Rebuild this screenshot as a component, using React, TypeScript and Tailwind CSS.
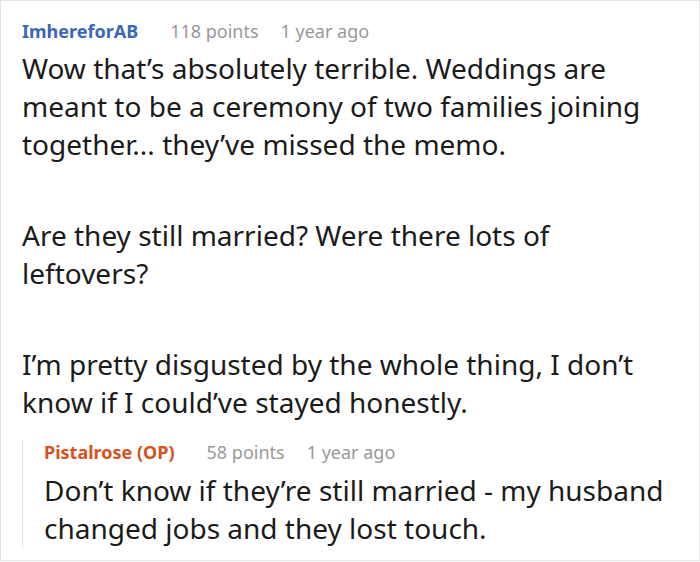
const font = { fontFamily: '"Noto Sans", "Open Sans", sans-serif' };

type MetaProps = { name: string; nameClass: string; points: string; age: string };

function Meta({ name, nameClass, points, age }: MetaProps) {
  return (
    <div className="flex items-baseline text-[18px] leading-[24px]">
      <span className={`font-bold ${nameClass}`}>{name}</span>
      <span className="ml-[32px] text-[#999999]">{points}</span>
      <span className="ml-[22px] text-[#999999]">{age}</span>
    </div>
  );
}

export default function App() {
  return (
    <div className="h-[562px] w-[700px] bg-white" style={font}>
      <div className="h-[561px] w-[700px] overflow-hidden border border-[#e3e3e3] pl-[21px] pr-[30px] pt-[18px]">
        <Meta name="ImhereforAB" nameClass="text-[#3a67b6]" points="118 points" age="1 year ago" />
        <div className="mt-[6px] text-[28px] leading-[38px] text-[#1b1b1b]">
          <p>
            Wow that’s absolutely terrible. Weddings are meant to be a ceremony of two families joining
            together... they’ve missed the memo.
          </p>
          <p className="mt-[53px]">Are they still married? Were there lots of leftovers?</p>
          <p className="mt-[53px]">
            I’m pretty disgusted by the whole thing, I don’t know if I could’ve stayed honestly.
          </p>
        </div>
        <div className="mt-[19px] border-l border-[#e3e3e3] pl-[21px]">
          <Meta name="Pistalrose (OP)" nameClass="text-[#d6531d]" points="58 points" age="1 year ago" />
          <p className="mt-[7px] text-[28px] leading-[38px] text-[#1b1b1b]">
            Don’t know if they’re still married - my husband changed jobs and they lost touch.
          </p>
        </div>
      </div>
    </div>
  );
}
